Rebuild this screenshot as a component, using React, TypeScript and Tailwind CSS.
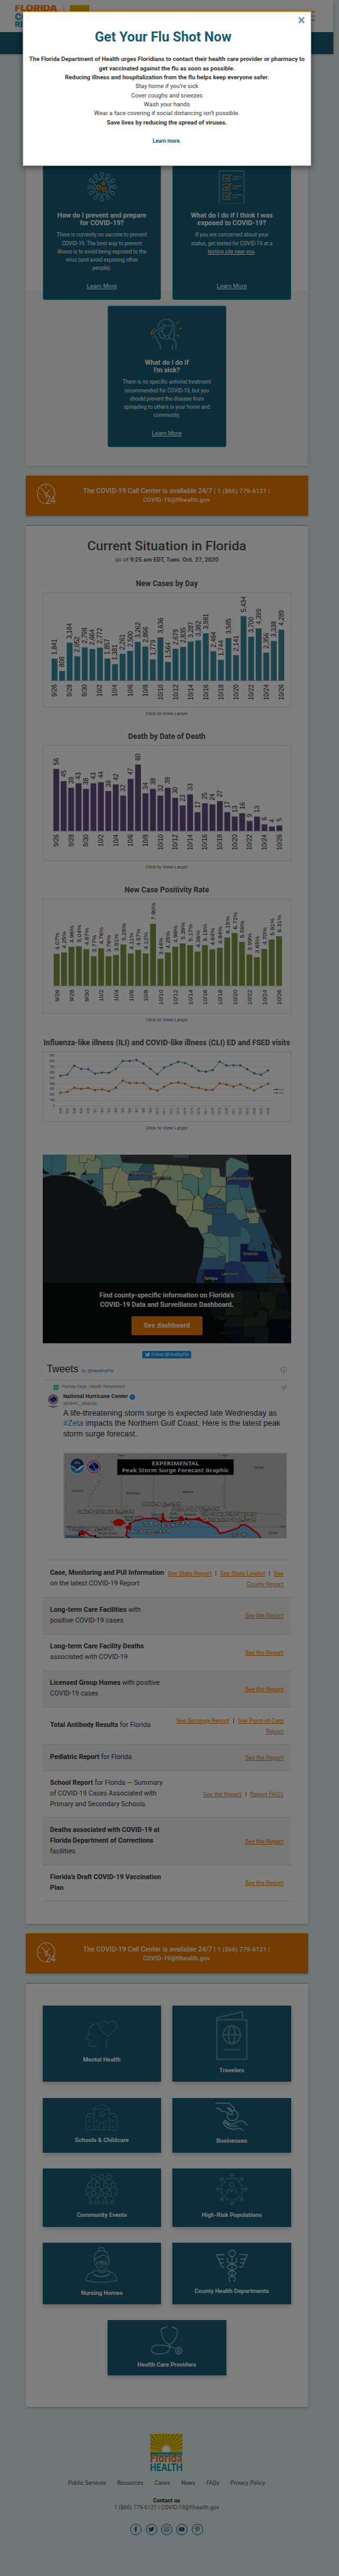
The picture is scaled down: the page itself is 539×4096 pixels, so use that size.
import React from 'react';
import { FaFacebookF, FaTwitter, FaInstagram, FaYoutube, FaPinterestP } from 'react-icons/fa';
import { BsPatchCheckFill } from 'react-icons/bs';

const FAINT = '#588a9e';
const BRIGHT = '#82adba';

/* ---------- logos ---------- */

function HealthLogo({ w, h }: { w: number; h: number }) {
  const rays = Array.from({ length: 15 }, (_, i) => (Math.PI * (i + 0.5)) / 15);
  return (
    <svg width={w} height={h} viewBox="0 0 85 98" preserveAspectRatio="none" className="block overflow-hidden">
      <rect width="85" height="50" fill="#eacb0a" />
      {rays.map((a, i) => (
        <path
          key={i}
          d={`M42 41L${42 + 90 * Math.cos(a - 0.04)} ${41 - 90 * Math.sin(a - 0.04)}L${42 + 90 * Math.cos(a + 0.04)} ${41 - 90 * Math.sin(a + 0.04)}Z`}
          fill="#b89a14"
        />
      ))}
      <circle cx="42.5" cy="42" r="14" fill="#e2cc50" />
      <circle cx="42.5" cy="42" r="10.5" fill="#fff" />
      <rect y="49" width="85" height="49" fill="#e0eeee" />
      <rect y="49" width="85" height="4" fill="#12a0ac" />
      <rect y="53" width="85" height="7" fill="#6cbcc2" />
      <text x="-1" y="75" textLength="86" lengthAdjust="spacingAndGlyphs" fontFamily="Lato, Roboto, sans-serif" fontWeight="900" fontSize="31" fill="#d8700a">Florida</text>
      <text x="-1" y="97.5" textLength="87" lengthAdjust="spacingAndGlyphs" fontFamily="Lato, Roboto, sans-serif" fontWeight="900" fontSize="28" fill="#009296">HEALTH</text>
    </svg>
  );
}

function SiteLogo() {
  return (
    <svg width="200" height="62" viewBox="0 0 200 62" className="block">
      <g fontFamily="Inter, sans-serif" fontWeight="900">
        <text x="-1" y="17" fontSize="23.5" textLength="114" lengthAdjust="spacingAndGlyphs" fill="#f58220">FLORIDA</text>
        <text x="-1" y="39.5" fontSize="23.5" textLength="114" lengthAdjust="spacingAndGlyphs" fill="#31a9c4">COVID-19</text>
        <text x="-1" y="58.5" fontSize="19" textLength="114" lengthAdjust="spacingAndGlyphs" fill="#31a9c4">RESPONSE</text>
      </g>
      <line x1="129.5" y1="0" x2="129.5" y2="60" stroke="#aaa" />
    </svg>
  );
}

/* ---------- icons of the question cards ---------- */

function VirusIcon() {
  const c = 38.5;
  const at = (a: number, r: number, o: number) =>
    `${(c + r * Math.sin(a) + o * Math.cos(a)).toFixed(2)} ${(c - r * Math.cos(a) + o * Math.sin(a)).toFixed(2)}`;
  let d = '';
  for (let i = 0; i < 12; i++) {
    const a = (i * Math.PI) / 6;
    const b = ((i + 1) * Math.PI) / 6;
    const m = (a + b) / 2;
    d += `${i === 0 ? 'M' : 'L'}${at(a, 29.5, -2)}A4.4 4.4 0 1 1 ${at(a, 29.5, 2)}L${at(a, 22.5, 2.2)}Q${at(m, 15, 0)} ${at(b, 22.5, -2.2)}`;
  }
  return (
    <svg width="77" height="77" viewBox="0 0 77 77" fill="none" strokeWidth="2.6" strokeLinejoin="round">
      <path d={d + 'Z'} stroke="#58a0b4" />
      <g stroke="#f07d00" strokeWidth="3">
        <circle cx="42" cy="29.5" r="3.4" />
        <circle cx="29.5" cy="40" r="4.8" />
        <circle cx="44.5" cy="45" r="4.8" />
      </g>
    </svg>
  );
}

function ChecklistIcon() {
  return (
    <svg width="68" height="90" viewBox="0 0 68 90" fill="none" stroke="#58a0b4" strokeWidth="2.4" strokeLinecap="round" strokeLinejoin="round">
      <rect x="1.2" y="1.2" width="65.6" height="87.6" rx="1" />
      {[0, 24, 48].map((y) => (
        <g key={y}>
          <path d={`M26 ${12 + y}H11V${28.5 + y}H28.5V${21 + y}M37 ${17.3 + y}H60M37 ${23.7 + y}H51`} />
          <path d={`M16.5 ${19 + y}L21.5 ${24 + y}L32.5 ${10.5 + y}`} stroke="#f07d00" strokeWidth="3" />
        </g>
      ))}
    </svg>
  );
}

function SickIcon() {
  return (
    <svg width="83" height="83" viewBox="699 478 144 162" preserveAspectRatio="none" fill="none" stroke="#58a0b4" strokeWidth="5" strokeLinecap="round" strokeLinejoin="round">
      <path d="M733 524V518A36 36 0 0 1 806 516V582M753 503Q766 518 804 510M753 503L762 512L712 548Q710 552 714 559L744 620V636M766 519L734 551L746 578Q756 582 762 576V566M751 538Q752 560 767 566Q796 566 795 518M783 566V578Q773 588 762 578M783 578L806 587Q815 594 814 606V636M798 614V636" />
      <path d="M827 491L819 501M832 529H840M819 559L827 568M716 529Q698 541 703 561M709 573L710 574" stroke="#f07d00" strokeWidth="5.5" />
    </svg>
  );
}

function ClockIcon() {
  return (
    <svg width="50" height="55" viewBox="0 0 50 55" fill="none" stroke="#fff" strokeWidth="1.8" strokeLinecap="round">
      <path d="M47 31A23.3 26 0 1 0 19.5 53" />
      <circle cx="24" cy="27.5" r="3.3" />
      <path d="M22 25L11 12.500M26.500 25L33 17M24 6V9.500M6 27.500H9" />
      <path d="M24 38Q24 32.500 29 32.500Q34 32.500 34 37Q34 40 24 52.500H34.500M45 53V33L36 47.500H49" strokeWidth="2.2" />
    </svg>
  );
}

/* ---------- icons of the audience tiles ---------- */

type TileIcon = { box: string; h: number; color: string; sw: number; body: React.ReactNode };

const person = (x: number, y: number) => <ellipse key={`${x}-${y}`} cx={x} cy={y} rx="18.500" ry="18" />;

const icons: Record<string, TileIcon> = {
  mental: {
    box: '23 111 255 226', h: 77, color: FAINT, sw: 6,
    body: (
      <path d="M116 132Q52 140 52 188Q56 214 46 224L27 243Q25 249 33 252Q44 251 49 260L54 274H72M54 274V288Q48 296 50 304Q54 314 68 313L98 309Q106 308 107 332M202 250Q178 286 190 332M161 117Q184 113 202 134Q218 112 244 115Q272 122 274 152Q272 166 264 174L202 234L138 176Q122 148 144 125M157 141Q148 156 162 165" />
    ),
  },
  travelers: {
    box: '1059 30 253 386', h: 132, color: FAINT, sw: 12,
    body: (
      <>
        <rect x="1067" y="101" width="238" height="307" rx="4" />
        <path d="M1066 100V92Q1066 86 1076 84L1262 40Q1272 38 1272 48V86M1126 333H1247M1118 217H1254" strokeLinecap="butt" />
        <circle cx="1186" cy="218" r="68" />
        <ellipse cx="1186" cy="218" rx="25" ry="68" />
      </>
    ),
  },
  schools: {
    box: '23 748 254 208', h: 71, color: FAINT, sw: 5,
    body: (
      <>
        <path d="M27 952V848L42 824H86M215 824H258L273 848V952H27M27 848H60M240 848H273M89 952V792M212 952V792M133 952V896H167V952M82 792L138 756Q150 748 162 756L218 792Z" />
        <path d="M51 872V886H67M51 915V929H67M107 876V886H116M107 919V929H116M183 876V886H193M183 919V929H193M235 872V886H250M235 915V929H250M152 824V831H146" />
        <circle cx="152" cy="830" r="20" />
      </>
    ),
  },
  businesses: {
    box: '1058 738 254 224', h: 76, color: '#8ebac8', sw: 8,
    body: (
      <>
        <path d="M1060 744H1166L1204 782L1209 802M1060 784H1082L1108 808Q1140 808 1162 826L1184 834Q1196 832 1190 820L1180 804Q1164 800 1152 780L1168 784Q1182 790 1184 806M1152 830Q1148 852 1160 868Q1184 892 1216 874Q1248 846 1228 816Q1210 796 1184 806" />
        <path d="M1306 916Q1282 880 1252 882L1224 892Q1196 914 1168 906L1144 884Q1132 872 1126 882Q1136 900 1162 912M1116 892Q1112 904 1146 930Q1176 950 1206 948Q1254 930 1274 958M1118 894Q1150 902 1168 922Q1196 932 1228 920" />
      </>
    ),
  },
  community: {
    box: '23 1291 254 240', h: 82, color: FAINT, sw: 7,
    body: (
      <>
        {[88, 150, 212].map((x) => person(x, 1311))}
        {[57, 119, 181, 243].map((x) => person(x, 1376))}
        {[88, 150, 212].map((x) => person(x, 1440))}
        <path d="M57 1354Q58 1338 76 1338M100 1338Q119 1338 119 1354Q119 1338 138 1338M162 1338Q181 1338 181 1354Q181 1338 200 1338M224 1338Q242 1338 243 1354M27 1461V1420Q28 1403 44 1402M44 1461V1432M70 1402Q88 1402 88 1420Q88 1402 106 1402M132 1402Q150 1402 150 1420Q150 1402 168 1402M194 1402Q212 1402 212 1420Q212 1402 230 1402M256 1402Q272 1403 274 1420V1461M256 1461V1432M57 1526V1480Q58 1466 76 1466M74 1526V1496M102 1526V1496M119 1526V1480Q119 1466 104 1466M119 1480Q119 1466 136 1466M136 1526V1496M164 1526V1496M181 1526V1480Q181 1466 166 1466M181 1480Q181 1466 198 1466M198 1526V1496M226 1526V1496M243 1526V1480Q242 1466 226 1466" />
      </>
    ),
  },
  highrisk: {
    box: '1057 1285 255 248', h: 86, color: FAINT, sw: 7,
    body: (
      <>
        <path d="M1185 1338V1290M1168 1307L1185 1290L1202 1307M1185 1480V1528M1168 1511L1185 1528L1202 1511M1112 1409H1062M1078 1392L1062 1409L1078 1426M1256 1409H1307M1292 1392L1307 1409L1292 1426M1134 1360L1097 1325M1121 1325H1097V1350M1236 1360L1272 1325M1248 1325H1272V1350M1134 1458L1097 1494M1121 1494H1097V1468M1236 1458L1272 1494M1248 1494H1272V1468" />
        <path d="M1138 1338Q1156 1326 1176 1325M1204 1326L1238 1340M1256 1366Q1268 1380 1270 1406M1270 1428L1258 1454M1236 1482Q1222 1490 1204 1493M1166 1493Q1150 1490 1138 1482M1114 1454Q1102 1440 1099 1410M1100 1390Q1106 1376 1114 1366" />
        <ellipse cx="1185" cy="1377" rx="18" ry="20" />
        <path d="M1148 1445V1428Q1150 1410 1168 1412L1185 1428L1202 1412Q1220 1410 1222 1428V1445" />
      </>
    ),
  },
  nursing: {
    box: '396 348 148 135', h: 96, color: BRIGHT, sw: 3,
    body: (
      <>
        <path d="M398 472Q400 452 420 444L443 435Q470 450 497 435L524 446Q540 454 542 472Q470 488 398 472ZM430 442L434 450Q470 466 506 450L510 442M434 450l4 4l6-2l6 6l6-2l6 4l8-2l8 2l6-4l6 2l6-6l6 2l4-4" />
        <path d="M437 398V385Q440 362 470 361Q502 362 503 388V398M454 361Q458 350 471 350Q484 350 486 361M438 398Q442 386 478 378Q500 380 504 398M438 398Q434 404 438 412L446 418Q454 436 470 437Q488 436 496 416L504 410Q508 402 503 396M446 404L470 402L494 404M446 404Q450 414 460 412Q466 410 467 404M474 404Q476 412 486 412Q492 412 494 404M470 402V412Q470 416 476 415M462 422Q470 424 478 422" />
      </>
    ),
  },
  county: {
    box: '997 356 149 119', h: 85.5, color: '#8ebac8', sw: 4,
    body: (
      <>
        <ellipse cx="1073" cy="370" rx="15" ry="12" />
        <path d="M1073 382V458M1036 375H1000L1026 420H1036M1008 391H1030M1016 405H1032M1108 374H1144L1120 420H1108M1138 391H1114M1130 405H1112" />
        <path d="M1055 389Q1044 396 1056 403L1090 415Q1102 420 1090 427L1064 436Q1046 444 1064 450L1084 458Q1094 466 1082 473M1090 389Q1102 396 1090 403L1056 415Q1044 420 1056 427L1082 436Q1100 444 1082 450L1064 458Q1052 466 1064 473" />
      </>
    ),
  },
  providers: {
    box: '698 639 148 107', h: 77, color: BRIGHT, sw: 4,
    body: (
      <>
        <path d="M773 642L750 649Q744 651 745 656Q750 690 771 703Q783 712 795 703Q818 690 821 656Q821 651 815 649L793 642M783 708Q788 726 776 735Q762 745 726 743Q698 740 700 726Q704 712 730 710Q770 710 808 722" />
        <ellipse cx="827" cy="731" rx="15" ry="12" strokeWidth="5" />
        <ellipse cx="827" cy="731" rx="6" ry="4.500" />
      </>
    ),
  },
};

function Tile({ icon, label, pt, className }: { icon: string; label: string; pt: string; className: string }) {
  const ic = icons[icon];
  return (
    <div className={`flex w-[315px] flex-col items-center bg-[#165c74] shadow-[0_5px_12px_rgba(0,0,0,0.22)] ${pt} ${className}`}>
      <svg width="85" height={ic.h} viewBox={ic.box} preserveAspectRatio="none" className="shrink-0 overflow-visible" fill="none" stroke={ic.color} strokeWidth={ic.sw} strokeLinecap="round" strokeLinejoin="round">
        {ic.body}
      </svg>
      <div className="mt-[14px] text-[15.900px] leading-[22px] font-bold text-white">{label}</div>
    </div>
  );
}

/* ---------- blocks ---------- */

function Card({ icon, title, children }: { icon: React.ReactNode; title: React.ReactNode; children: React.ReactNode }) {
  return (
    <div className="flex h-[375px] w-[315px] flex-col items-center rounded-[5px] border border-[#3a9cb6] bg-[#165c74] text-center text-white">
      <div className="flex h-[139.500px] items-center pt-[8px]">{icon}</div>
      <h3 className="text-[18px] leading-[21px] font-bold">{title}</h3>
      <p className="mt-[9px] text-[13.850px] leading-[22px] whitespace-nowrap">{children}</p>
      <a className="mt-auto mb-[23px] text-[15.800px] leading-[24px] underline">Learn More</a>
    </div>
  );
}

function CallCenter({ className }: { className: string }) {
  return (
    <section className={`flex h-[107px] w-[750px] rounded-[3px] border-t-2 border-[#ff8c00] bg-[#e67600] pt-[21px] pl-[30px] shadow-[0_3px_6px_rgba(0,0,0,0.2)] ${className}`}>
      <ClockIcon />
      <div className="ml-[31px] w-[580px] pt-[8px] text-center text-[18px] leading-[24px] text-white">
        <span className="font-medium">The COVID-19 Call Center is available 24/7 | </span>
        <span className="text-[16px] font-medium tracking-[0.44px]">
          1 (866) 779-6121 |<br />COVID-19@flhealth.gov
        </span>
      </div>
    </section>
  );
}

const days = ['9/26', '9/27', '9/28', '9/29', '9/30', ...Array.from({ length: 26 }, (_, i) => `10/${i + 1}`)];

type BarProps = {
  values: number[]; fmt: (v: number) => string; color: string;
  x0: number; pitch: number; base: number; unit: number; dateGap: number; size: number;
};

function BarChart({ values, fmt, color, x0, pitch, base, unit, dateGap, size }: BarProps) {
  return (
    <svg width="660" height="306" viewBox="0 0 660 306" className="block border border-[#dadada]" fontFamily="Liberation Sans, Arial, sans-serif" fontSize={size} fill="#222">
      <line x1={x0 - pitch / 2} x2={x0 + pitch * 30.500} y1={base + 0.8} y2={base + 0.8} stroke="#d0d0d0" strokeWidth="1.6" />
      {values.map((v, i) => {
        const x = x0 + i * pitch;
        return (
          <g key={i}>
            <rect x={x - 7.8} width="15.600" y={base - v * unit} height={v * unit} fill={color} />
            <text transform={`translate(${x + 6} ${base - v * unit - 10.500}) rotate(-90)`}>{fmt(v)}</text>
            {i % 2 === 0 && (
              <>
                <line x1={x - pitch / 2} x2={x - pitch / 2} y1={base} y2={base + 5.500} stroke="#c8c8c8" />
                <text transform={`translate(${x + 6} ${base + dateGap}) rotate(-90)`} textAnchor="end">{days[i]}</text>
              </>
            )}
          </g>
        );
      })}
    </svg>
  );
}

const cases = [1841, 808, 3184, 2052, 2798, 2664, 2772, 1857, 1381, 2261, 2500, 3262, 2866, 1779, 3636, 1564, 2679, 2835, 3287, 3382, 3981, 2464, 1744, 3585, 2141, 5434, 3700, 4399, 2356, 3338, 4289];
const deaths = [56, 45, 39, 43, 38, 43, 44, 36, 42, 32, 47, 60, 34, 38, 32, 39, 30, 23, 33, 17, 25, 24, 27, 17, 13, 16, 9, 13, 6, 4, 5];
const rates = [4.07, 4.25, 4.96, 5.04, 4.67, 3.77, 4.76, 3.76, 3.91, 5.26, 4.11, 4.57, 4.12, 7.9, 3.44, 4.25, 4.98, 5.39, 5.17, 4.36, 5.19, 4.64, 4.84, 6.15, 6.72, 5.59, 3.99, 3.65, 4.7, 5.91, 6.31];
const cli = [540, 560, 720, 663, 660, 578, 597, 593, 663, 805, 805, 822, 758, 663, 567, 687, 740, 790, 768, 715, 630, 613, 643, 792, 725, 728, 726, 655, 583, 557, 636];
const ili = [238, 252, 325, 307, 323, 283, 296, 264, 328, 453, 412, 410, 412, 308, 272, 345, 405, 420, 400, 335, 323, 288, 287, 405, 383, 347, 388, 326, 277, 343, 400];

function LineChart() {
  const X = (i: number) => 41.7 + i * 18.720;
  const Y = (v: number) => 145.500 - v * 0.1511;
  const series: [number[], string][] = [[cli, '#34788c'], [ili, '#c86a10']];
  return (
    <svg width="660" height="186" viewBox="0 0 660 186" className="block border border-[#dadada]" fontFamily="Open Sans, sans-serif" fontSize="7.600" fill="#222">
      {Array.from({ length: 10 }, (_, i) => (
        <g key={i}>
          <line x1="31.500" x2="613" y1={Y(i * 100)} y2={Y(i * 100)} stroke="#dadada" />
          <text x="25.500" y={Y(i * 100) + 2.7} textAnchor="end">{i * 100}</text>
        </g>
      ))}
      {days.map((d, i) => (
        <g key={d}>
          <line x1={X(i) - 9.360} x2={X(i) - 9.360} y1="145.500" y2="148" stroke="#c8c8c8" />
          <text transform={`translate(${X(i) + 2.8} 150.500) rotate(-90)`} textAnchor="end">{d}</text>
        </g>
      ))}
      {series.map(([vals, color]) => (
        <g key={color} stroke={color} fill={color}>
          <polyline fill="none" strokeWidth="1.600" points={vals.map((v, i) => `${X(i)},${Y(v)}`).join(' ')} />
          {vals.map((v, i) => <circle key={i} cx={X(i)} cy={Y(v)} r="2.600" />)}
        </g>
      ))}
      <g strokeWidth="1.500">
        <path d="M617.500 101H635" stroke="#34788c" /><circle cx="626" cy="101" r="2.200" fill="#34788c" />
        <path d="M617.500 110.500H635" stroke="#c86a10" /><circle cx="626" cy="110.500" r="2.200" fill="#c86a10" />
      </g>
      <text x="636.500" y="103.600" fontSize="7.200">CLI</text>
      <text x="636.500" y="113.100" fontSize="7.200">ILI</text>
    </svg>
  );
}

/* county fills, drawn on a 1568 x 1545 grid */
const T = '#579fae', G = '#b0cda2', C = '#cacf9f', S = '#7cb6ac', B = '#427aa0', N = '#345294', D = '#16286e';
const counties: [string, string][] = [
  ['#3a3d3c', '486,24 1285,24 1275,90 1225,62 1185,46 1156,80 1155,203 1120,200 1112,132 502,88'],
  [T, '0,24 54,24 56,187 0,208'], [T, '54,24 148,24 147,190 56,187'],
  [G, '148,24 230,24 230,87 268,88 258,110 272,155 245,180 241,226 190,200 147,190'],
  [C, '230,24 332,24 328,72 302,72 298,58 282,58 280,87 230,87'],
  [G, '282,58 298,58 302,72 328,72 334,45 358,45 358,60 370,60 370,132 358,135 358,175 272,178 275,155 258,115 270,88 280,87'],
  [S, '332,24 486,24 502,88 485,122 432,122 432,133 370,132 370,60 358,60 358,45 334,45'],
  [T, '241,185 358,176 358,135 380,134 380,350 320,290 241,226'],
  [C, '380,134 432,133 432,122 475,122 480,138 460,180 440,258 380,258'],
  [C, '485,122 498,122 498,150 520,155 522,170 545,180 538,215 545,270 575,318 468,321 440,312 442,258 460,180'],
  [C, '380,258 440,258 438,300 465,325 460,400 425,432 400,430 400,395 380,350'],
  [C, '468,321 580,318 622,340 622,355 540,385 480,420 440,438 425,430 460,400 465,360'],
  [S, '502,88 632,96 610,135 610,155 545,180 522,170 520,155 498,150 498,122 485,122'],
  [B, '632,96 700,100 705,148 690,155 686,232 645,234 640,222 538,222 545,195 610,155 615,130'],
  [G, '535,228 640,224 645,234 684,234 684,290 655,290 620,300 600,330 575,318 545,275'],
  [C, '700,100 792,105 790,135 765,160 755,200 730,225 705,290 684,290 690,155 705,148'],
  [G, '792,105 870,112 890,180 878,235 830,235 825,222 765,222 755,200 765,160 790,135'],
  [C, '872,112 1003,124 998,160 1016,190 1005,215 985,213 930,180 890,180'],
  [G, '740,225 825,222 830,235 850,238 852,380 858,400 850,435 810,420 800,385 780,350 705,292'],
  [G, '850,238 878,238 880,290 925,310 955,360 950,384 852,384'],
  [S, '890,185 930,178 982,215 980,355 955,360 925,305 880,290 878,235'],
  [S, '1003,124 1060,128 1060,280 1035,330 1015,382 985,350 982,215 1005,215 1016,190 998,160'],
  [G, '1060,128 1112,132 1120,200 1155,203 1155,278 1060,276'],
  [S, '1155,203 1156,80 1185,46 1225,62 1275,90 1298,95 1298,150 1245,130 1210,165 1185,200'],
  [N, '1185,200 1210,165 1245,130 1290,150 1308,240 1298,290 1240,282 1235,263 1157,262 1157,235'],
  [T, '1157,262 1240,265 1240,310 1258,380 1205,382 1157,412'],
  [T, '1240,282 1298,290 1308,240 1330,360 1345,440 1318,450 1277,450 1262,380 1240,310'],
  [C, '1060,278 1132,280 1100,335 1075,350 1040,340 1036,320'],
  [G, '1132,280 1155,280 1155,412 1120,380 1075,350 1105,335'],
  [B, '1015,382 1040,345 1060,348 1120,375 1155,410 1152,505 1130,520 1115,500 1040,498 1015,480'],
  [C, '855,385 950,385 942,450 945,468 915,545 900,550 880,515 842,488 840,440 850,430'],
  [C, '950,385 970,350 985,350 1013,385 1013,470 985,465 945,465'],
  [G, '945,468 985,465 1015,480 1040,498 1070,500 1070,588 1042,590 1042,645 998,658 978,605 925,600 900,555 915,545'],
  [B, '1070,500 1115,500 1130,520 1155,498 1205,488 1228,515 1228,535 1248,548 1250,590 1245,672 1090,672 1065,648 1042,645 1042,590 1070,588'],
  [S, '1157,412 1205,382 1262,380 1277,450 1290,530 1248,548 1228,535 1205,488 1157,498'],
  [G, '1277,455 1318,450 1345,440 1372,520 1362,522 1362,573 1300,573 1300,530 1290,530'],
  [B, '1248,548 1300,535 1300,573 1362,573 1362,522 1375,520 1450,740 1400,735 1380,720 1350,730 1315,710 1315,675 1290,620 1250,590'],
  [S, '998,658 1060,645 1090,672 1125,730 1100,772 1070,765 1015,765 1018,700'],
  [S, '1090,672 1176,674 1176,885 1152,888 1152,820 1115,800 1100,772 1125,730'],
  [S, '1015,765 1068,765 1100,772 1115,800 1152,825 1152,832 1105,832 1105,848 1010,848'],
  [T, '1176,674 1245,672 1250,590 1290,620 1315,675 1310,712 1300,735 1247,735 1247,878 1176,878'],
  [B, '1010,848 1105,848 1105,832 1152,832 1152,937 985,937 1000,900'],
  [D, '1247,735 1300,735 1292,780 1320,790 1410,795 1427,878 1247,878'],
  [B, '1300,735 1315,710 1350,730 1380,720 1410,792 1320,790 1292,780'],
  [B, '1400,732 1438,735 1450,790 1475,890 1522,1050 1427,1050 1428,878 1410,795'],
  [B, '1450,765 1490,790 1508,840 1490,870 1490,930 1470,890 1465,830'],
  [N, '1152,890 1176,878 1200,872 1247,878 1275,910 1290,960 1325,1010 1365,1108 1152,1108 1142,910'],
  [B, '1247,878 1427,878 1427,1108 1365,1108 1325,1010 1290,960 1275,910'],
  [D, '1015,937 1152,937 1152,1108 1040,1108 1075,1030 1040,1015 1015,980'],
  [N, '985,937 1015,937 1015,1070 1000,1095 968,1035'],
  [B, '1040,1108 1152,1108 1152,1310 1090,1340 1040,1230 1010,1140'],
  [C, '1152,1110 1267,1110 1267,1210 1152,1210'], [C, '1152,1213 1267,1213 1267,1310 1152,1310'],
  [S, '1267,1112 1365,1112 1350,1160 1400,1220 1425,1260 1360,1255 1360,1283 1336,1283 1336,1312 1267,1312'],
  [C, '1365,1112 1450,1114 1450,1138 1472,1138 1472,1290 1425,1338 1425,1270 1365,1190'],
  [S, '1427,1052 1522,1052 1552,1138 1450,1138 1450,1108 1427,1108'],
  [T, '1472,1138 1552,1138 1568,1180 1568,1255 1472,1255'], [S, '1472,1258 1568,1258 1568,1336 1425,1336'],
  [S, '1105,1313 1267,1313 1267,1398 1130,1398'], [C, '1267,1313 1336,1312 1360,1283 1360,1255 1425,1270 1410,1398 1267,1398'],
  [N, '1130,1398 1267,1398 1267,1480 1235,1524 1150,1480'], [S, '1267,1398 1425,1398 1425,1524 1336,1524 1336,1480 1267,1480'],
  [N, '1205,1524 1267,1480 1336,1480 1336,1524'], [D, '1425,1338 1568,1338 1568,1524 1425,1524'],
];

function CountyMap() {
  const cities: [string, number, number, number, string][] = [
    ['Valdosta', 345, 17, 42, '#a8a8a8'], ['Tallahassee', 235, 62, 66, '#d0d0d0'], ['Jacksonville', 489, 74, 71, '#d0d0d0'],
    ['Gainesville', 433, 150, 53, '#b4b4b4'], ['Palm Coast', 539, 162, 54, '#909090'], ['Orlando', 532, 274.500, 40, '#c0c0c0'],
    ['Lakeland', 474, 329, 43, '#b8b8b8'], ['Tampa', 427.500, 340, 37, '#d0d0d0'], ['Palm Bay', 598, 334, 45, '#a8a8a8'],
    ['Cape Coral', 468, 484, 53, '#b0b0b0'], ['Port S', 632, 407, 28, '#b0b0b0'], ['Lucie', 637, 420, 23, '#b0b0b0'], ['W', 650, 469, 10, '#b0b0b0'],
  ];
  return (
    <svg width="660" height="500" viewBox="0 8 660 500" className="block">
      <rect y="8" width="660" height="500" fill="#1f2125" />
      <g transform="scale(0.42092 0.33333)" stroke="#5c6462" strokeWidth="2.400" strokeLinejoin="round">
        {counties.map(([fill, pts]) => <polygon key={pts} points={pts} fill={fill} />)}
        <path d="M0 205L60 188L130 188L200 205L300 270L380 350M378 370L375 395L388 432L420 432M440 440L460 460L520 425L570 385" fill="none" stroke="#555c60" strokeWidth="4" />
        <path d="M1283 24L1290 100L1298 100L1318 310L1345 440L1420 640L1505 800L1480 900L1568 1180M1435 735L1470 860L1500 960" fill="none" stroke="#555c60" strokeWidth="4" />
        <path d="M105 178L125 170L150 165L165 155L175 168L200 163L212 190L180 182L150 188L125 184ZM0 120L10 150L45 172L20 182L0 170ZM272 225L300 232L310 218L318 240L340 232L312 252L300 270L330 285L350 300L378 315L345 310L310 285L290 250ZM485 405L505 390L500 412L530 400L480 425ZM1438 735L1470 830L1462 880L1490 920L1480 940L1445 800ZM1000 985L1040 1000L1075 1030L1060 1085L1030 1110L1010 1170L998 1130L1040 1060L1010 1015ZM1110 1330L1135 1350L1170 1315L1140 1380L1150 1430L1190 1510L1140 1500L1110 1440L1125 1400ZM500 60L550 60L520 75Z" fill="#1f2125" stroke="none" />
      </g>
      <g fontFamily="Noto Sans, sans-serif" fontWeight="600" fontSize="11.500" stroke="#2a2c30" strokeWidth="2" paintOrder="stroke">
        {cities.map(([name, x, y, len, fill]) => (
          <text key={name} x={x} y={y} textLength={len} lengthAdjust="spacingAndGlyphs" fill={fill}>{name}</text>
        ))}
        <text x="282" y="75.500" textLength="60" lengthAdjust="spacingAndGlyphs" fill="#6c746e" stroke="#3c4240" strokeWidth="1">FLORIDA</text>
      </g>
    </svg>
  );
}

function NwsBadge({ cx, cy, r }: { cx: number; cy: number; r: number }) {
  return (
    <g transform={`translate(${cx} ${cy}) scale(${r / 21})`}>
      <circle r="21" fill="#eee" />
      <circle r="17" fill="none" stroke="#d02030" strokeWidth="5" strokeDasharray="3 1.800" />
      <circle r="13.500" fill="#3aa0dc" />
      <path d="M-13 1Q-9-5-6-3Q-5-10 1-9Q6-11 9-5Q13-5 13 1Q13 6 5 5L3 11L-3 9L-6 5Q-12 6-13 1Z" fill="#0a0a90" />
      <path d="M-5-9L1 0L0 2L6 10" fill="none" stroke="#fff" strokeWidth="1.500" />
    </g>
  );
}

function SurgeMap() {
  const big: [string, number, number, number, number][] = [
    ['Mobile Bay...3-5 ft', 217, 151, 101, 11], ['Pensacola Bay...2-4 ft', 297, 164, 123, 11], ['Lake Pontchartrain...2-4 ft', 47, 171.500, 147, 11],
    ['Choctawhatchee Bay and', 374, 178, 146, 11], ['Saint Andrew Bay...1-3 ft', 378, 192, 139, 11], ['Vermilion Bay...1-3 ft', 20, 216, 117, 11],
    ['Lake Borgne...4-6 ft', 179, 223.500, 111, 11], ['5-8 ft', 221, 203, 37, 12.500], ['3-5 ft', 267, 207, 37, 12.500], ['2-4 ft', 306, 201, 38, 12.500], ['1-3 ft', 455, 232, 38, 12.500],
  ];
  const small: [string, number, number, number, number][] = [
    ['Dauphin', 241, 177, 34, 9], ['Island', 242, 186.500, 24, 9], ['AL/FL', 290, 176, 22, 9], ['Border', 289, 185.500, 27, 9], ['Navarre', 328, 178, 32, 9],
    ['Mouth of the', 168, 183.500, 52, 9], ['Pearl River', 172, 193, 44, 9], ['Mouth of the', 99, 228, 51, 9], ['Atchafalaya River', 99, 237.500, 71, 9], ['Intracoastal', 14, 236, 49, 9],
    ['Louisiana', 29, 114, 31, 7.500], ['Mississippi', 174, 121, 37, 7.500], ['Alabama', 324, 118, 28, 7.500], ['Georgia', 514, 51.500, 25, 7.500], ['Florida', 553, 226, 23, 7.500],
    ['90°W', 154, 21, 15, 6.500], ['85°W', 429, 21, 15, 6.500], ['30°N', 582.500, 209, 13, 6.500], ['30°N', 15, 209, 12, 6.500],
  ];
  return (
    <svg width="594" height="228" viewBox="7.600 10.500 594.400 228" className="block">
      <rect x="8" y="11" width="594" height="240" rx="3" fill="#fff" stroke="#8f8f8f" />
      <rect x="10.800" y="13.800" width="588.500" height="240" fill="#bcbcbc" stroke="#8a8a8a" />
      <g transform="scale(0.38903 0.33333)" fill="none" stroke="#6a6a6a" strokeWidth="2">
        <path d="M440 735L446 690L470 640L490 610L520 580L600 558L640 560L700 585L760 580L860 560L950 562L1066 636L1086 678L1130 668L1214 630L1240 605L1270 610L1350 680L1372 735ZM28 684L110 680L135 700L190 690L235 700L265 735H28Z" fill="#6cacd4" stroke="none" />
        <path d="M416 42V620M1122 42V460M28 622H1540M185 457H455L445 520M755 457H1122L1135 500L1515 524L1525 560H1540M657 42L632 310L640 560M1080 42L1090 100M1122 210L1135 245L1118 265L1105 320L1115 370L1106 420L1122 457M248 42L265 70L245 80L268 110L258 140L275 170L262 200L290 232L270 250L268 275L250 260L262 290L235 300L240 325L212 335L225 355L195 365L210 385L183 410L200 440L185 457" />
        <path d="M134 42V52M275 42V52M557 42V52M699 42V52M840 42V52M981 42V52M1264 42V52M1405 42V52M28 125H38M28 291H38M28 457H38M1540 126H1530M1540 291H1530M1540 457H1530" strokeWidth="3" />
        <path d="M334 580L350 566L358 580L345 594Z" fill="#6cacd4" stroke="none" />
        <path d="M356 592L365 570L395 558L430 570L435 588L452 592L430 600L410 616L370 610ZM440 620L485 595L480 640L455 655ZM698 500L712 560L730 575L690 585L685 560ZM120 660L150 650L178 662L160 690L125 686ZM820 530L840 548L838 575L800 575ZM900 560L950 543L960 562L1000 570L1040 610L1060 625L1020 610L950 575Z" fill="#f00000" stroke="none" />
        <path d="M475 715L446 690L456 655L466 620L478 595L515 572L580 555L650 557L690 580L760 578L860 560L950 563L1020 600L1066 636L1086 674L1126 665L1214 630L1234 605L1266 606L1350 678L1372 725M128 684L172 665L200 690L236 698L262 716" stroke="#f00000" strokeWidth="11" />
        {[[128, 684], [236, 697], [473, 597], [688, 579], [762, 576], [859, 558]].map(([x, y]) => (
          <ellipse key={x} cx={x} cy={y} rx="9" ry="12" fill="#000" stroke="#fff" strokeWidth="2" />
        ))}
      </g>
      <g fontFamily="Noto Sans, sans-serif" fill="#333">
        {small.map(([t, x, y, l, s], i) => <text key={i} x={x} y={y} fontSize={s} textLength={l} lengthAdjust="spacingAndGlyphs">{t}</text>)}
      </g>
      <g fontFamily="Liberation Sans, Arial, sans-serif" fontWeight="700" fill="#f4f4f4" stroke="#333" strokeWidth="2" paintOrder="stroke">
        {big.map(([t, x, y, l, s]) => <text key={t} x={x} y={y} fontSize={s} textLength={l} lengthAdjust="spacingAndGlyphs">{t}</text>)}
      </g>
      <rect x="150.500" y="28" width="309" height="41" fill="#000" stroke="#555" />
      <g fontFamily="Noto Sans, sans-serif" fontWeight="700" fill="#e8e8e8">
        <text x="242" y="43.500" fontSize="16" textLength="126" lengthAdjust="spacingAndGlyphs">EXPERIMENTAL</text>
        <text x="163" y="63" fontSize="16" textLength="284" lengthAdjust="spacingAndGlyphs">Peak Storm Surge Forecast Graphic</text>
      </g>
      <circle cx="44" cy="47" r="20" fill="#e4e4e4" />
      <circle cx="44" cy="47" r="18" fill="#1090c8" />
      <path d="M26 44A18 18 0 0 1 62 44L46 54Z" fill="#203878" />
      <path d="M26 43Q34 44 43 56Q52 44 62 42Q56 54 44 58L38 60L42 56Q34 50 26 43Z" fill="#fff" />
      <text x="36" y="41" fontSize="7" fontWeight="700" fontFamily="Inter, sans-serif" textLength="15" lengthAdjust="spacingAndGlyphs" fill="#c8d0e0">NOAA</text>
      <NwsBadge cx={88} cy={47} r={21} />
    </svg>
  );
}

function ChartBlock({ title, className, children }: { title: string; className: string; children: React.ReactNode }) {
  return (
    <div className={`flex flex-col items-center ${className}`}>
      <h3 className="h-[34px] text-[20px] leading-[22px] font-bold whitespace-nowrap text-[#4d4d4d]">{title}</h3>
      {children}
      <div className="mt-[7px] text-[12.750px] leading-[20px] text-[#555]">Click to View Larger</div>
    </div>
  );
}

function Links({ items }: { items: string[][] }) {
  return (
    <div className="pr-[20px] text-right text-[15.650px] leading-[28.500px] whitespace-nowrap text-[#222]">
      {items.map((line, i) => (
        <div key={i}>
          {line.map((l, j) => (l === '|' ? <span key={j} className="px-[9.500px]">|</span> : <a key={j} className="text-[#e67600] underline">{l}</a>))}
        </div>
      ))}
    </div>
  );
}

const report = [['See the Report']];
const rows: { h: string; text: React.ReactNode; links: string[][] }[] = [
  { h: 'h-[99px]', text: <><b>Case, Monitoring and PUI Information</b><br />on the latest COVID-19 Report</>, links: [['See State Report', '|', 'See State Linelist', '|', 'See'], ['County Report']] },
  { h: 'h-[98px]', text: <><b>Long-term Care Facilities</b> with<br />positive COVID-19 cases</>, links: report },
  { h: 'h-[96.500px]', text: <><b>Long-term Care Facility Deaths</b><br />associated with COVID-19</>, links: report },
  { h: 'h-[97px]', text: <><b>Licensed Group Homes</b> with positive<br />COVID-19 cases</>, links: report },
  { h: 'h-[98.500px]', text: <><b>Total Antibody Results</b> for Florida</>, links: [['See Serology Report', '|', 'See Point-of-Care'], ['Report']] },
  { h: 'h-[70px]', text: <><b>Pediatric Report</b> for Florida</>, links: report },
  { h: 'h-[125px]', text: <><b>School Report</b> for Florida — Summary<br />of COVID-19 Cases Associated with<br />Primary and Secondary Schools</>, links: [['See the Report', '|', 'Report FAQ’s']] },
  { h: 'h-[125.500px]', text: <><b>Deaths associated with COVID-19 at<br />Florida Department of Corrections</b><br />facilities</>, links: report },
  { h: 'h-[96.500px]', text: <b>Florida’s Draft COVID-19 Vaccination<br />Plan</b>, links: report },
];

function Tweets() {
  return (
    <div className="h-[575px] font-['Liberation_Sans',Arial,sans-serif] text-[#292f33]">
      <div className="mx-auto mt-[20px] flex h-[20px] w-[130px] items-center justify-center gap-[4px] rounded-[3px] bg-[#1b95e0] text-[11px] text-white">
        <FaTwitter size={13} /> Follow @HealthyFla
      </div>
      <div className="flex h-[59px] items-center border-b border-[#e1e8ed] px-[11px]">
        <span className="text-[26.500px]">Tweets</span>
        <span className="mt-[11px] ml-[8px] text-[12px] text-[#697882]">by <span className="text-[#2b7bb9]">@HealthyFla</span></span>
        <svg width="17" height="17" viewBox="0 0 17 17" className="mt-[6px] ml-auto" fill="none" stroke="#8899a6" strokeWidth="1.500">
          <circle cx="8.500" cy="8.500" r="7.500" />
          <path d="M8.500 7.500V13M8.500 4.500V6" strokeWidth="2" />
        </svg>
      </div>
      <div className="flex items-center pt-[9px] pr-[10px] pl-[29px]">
        <svg width="14" height="14" viewBox="0 0 14 14" fill="none" stroke="#fff" strokeWidth="1.400">
          <rect width="14" height="14" rx="2" fill="#19cf86" stroke="none" />
          <path d="M2 6L4 4L6 6M4 4V10H7.500M12 8L10 10L8 8M10 10V4H6.500" />
        </svg>
        <span className="ml-[8px] text-[12px] text-[#697882]">Florida Dept. Health Retweeted</span>
        <FaTwitter size={17} className="ml-auto text-[#ccd6dd]" />
      </div>
      <div className="flex pl-[12px]">
        <svg width="32" height="38" viewBox="0 0 42 50" className="mt-[8px]">
          <NwsBadge cx={21} cy={20} r={19} />
          <path d="M5 44H37M14 48H28" stroke="#3a3a90" strokeWidth="2" />
        </svg>
        <div className="ml-[11px]">
          <div className="mt-[7px] flex items-center text-[13.950px] leading-[20px] font-bold">
            National Hurricane Center <BsPatchCheckFill size={15} className="ml-[4px] text-[#1b95e0]" />
          </div>
          <div className="text-[12.900px] leading-[16px] text-[#697882]">@NHC_Atlantic</div>
          <p className="mt-[4px] text-[20.900px] leading-[27px] whitespace-nowrap">
            A life-threatening storm surge is expected late Wednesday as<br />
            <span className="text-[#2b7bb9]">#Zeta</span> impacts the Northern Gulf Coast. Here is the latest peak<br />
            storm surge forecast.
          </p>
          <div className="mt-[37px]"><SurgeMap /></div>
        </div>
      </div>
    </div>
  );
}

function Modal() {
  return (
    <div className="absolute top-[30px] left-[59.500px] h-[411.500px] w-[767.500px] border border-t-[3px] border-[#999] border-t-[#ff8c00] bg-white text-center shadow-[0_5px_15px_rgba(0,0,0,0.5)]">
      <svg width="18" height="17" viewBox="0 0 18 17" className="absolute top-[14px] right-[16px]" stroke="#6f9aab" strokeWidth="4.400" strokeLinecap="butt">
        <path d="M2 1L16 16M16 1L2 16" />
      </svg>
      <h2 className="mt-[45px] pr-[20px] text-[36px] leading-[42px] font-bold text-[#165c74]">Get Your Flu Shot Now</h2>
      <div className="mt-[27px] text-[16px] leading-[24px] text-[#333]">
        <div className="font-bold whitespace-nowrap">
          The Florida Department of Health urges Floridians to contact their health care provider or pharmacy to<br />
          get vaccinated against the flu as soon as possible.<br />
          Reducing illness and hospitalization from the flu helps keep everyone safer.
        </div>
        Stay home if you’re sick<br />
        Cover coughs and sneezes<br />
        Wash your hands<br />
        Wear a face covering if social distancing isn’t possible.
        <div className="font-bold">Save lives by reducing the spread of viruses.</div>
      </div>
      <a className="mt-[26px] block text-[14px] leading-[22px] font-bold text-[#165c74]">Learn more.</a>
    </div>
  );
}

export default function App() {
  return (
    <div className="min-h-[4096px] overflow-hidden bg-[#707777]">
      <div className="relative h-[6842px] w-[901px] overflow-hidden bg-[#e0eeee] font-[Roboto,sans-serif] text-[#333] [zoom:0.5987]">
        <div className="w-[885px] shadow-[0_2px_6px_rgba(0,0,0,0.35)]">
          <header className="flex h-[85px] items-start bg-white pt-[13.500px] pl-[40px]">
            <SiteLogo />
            <div className="-ml-[54px]"><HealthLogo w={52} h={60} /></div>
            <div className="mt-[16.500px] mr-[49px] ml-auto flex w-[36px] flex-col gap-[8px]">
              <span className="h-[3px] bg-[#ff8c00]" />
              <span className="h-[3px] bg-[#ff8c00]" />
              <span className="h-[3px] bg-[#ff8c00]" />
            </div>
          </header>
          <div className="h-[59px] bg-[#165c74]" />
        </div>

        <main className="flex flex-col pl-[68px]">
          <section className="mt-[28px] flex h-[1065px] w-[750px] flex-col items-center bg-[linear-gradient(#fff_600px,#f2f2f2_600px)] pt-[249.500px] shadow-[0_2px_6px_rgba(0,0,0,0.2)]">
            <div className="flex gap-[30px]">
              <Card icon={<VirusIcon />} title={<>How do I prevent and prepare<br />for COVID-19?</>}>
                There is currently no vaccine to prevent<br />COVID-19. The best way to prevent<br />illness is to avoid being exposed to the<br />virus (and avoid exposing other<br />people).
              </Card>
              <Card icon={<ChecklistIcon />} title={<>What do I do if I think I was<br />exposed to COVID-19?</>}>
                If you are concerned about your<br />status, get tested for COVID-19 at a<br /><span className="underline">testing site near you</span>.
              </Card>
            </div>
            <div className="mt-[16px]">
              <Card icon={<SickIcon />} title={<>What do I do if<br />I'm sick?</>}>
                There is no specific antiviral treatment<br />recommended for COVID-19, but you<br />should prevent the disease from<br />spreading to others in your home and<br />community.
              </Card>
            </div>
          </section>

          <CallCenter className="mt-[25px]" />

          <section className="mt-[25px] flex h-[3716px] w-[750px] flex-col rounded-[3px] border-t-2 border-[#ff8c00] bg-white px-[45px] shadow-[0_2px_6px_rgba(0,0,0,0.2)]">
            <h2 className="mt-[33px] text-center text-[35.300px] leading-[42px] font-medium text-[#4d4d4d]">Current Situation in Florida</h2>
            <p className="mt-[5px] text-center text-[16px] leading-[24px] text-[#555]">as of <span className="text-[15.900px] font-bold">9:25 am EDT, Tues. Oct. 27, 2020</span></p>
            <ChartBlock title="New Cases by Day" className="mt-[40px]">
              <BarChart values={cases} fmt={(v) => v.toLocaleString('en-US')} color="#35879d" x0={28} pitch={20.3} base={235} unit={0.03187} dateGap={10} size={17} />
            </ChartBlock>
            <ChartBlock title="Death by Date of Death" className="mt-[39.500px]">
              <BarChart values={deaths} fmt={String} color="#5e4b7c" x0={32.500} pitch={19.970} base={228.500} unit={2.976} dateGap={9} size={17} />
            </ChartBlock>
            <ChartBlock title="New Case Positivity Rate" className="mt-[40px]">
              <BarChart values={rates} fmt={(v) => v.toFixed(2) + '%'} color="#7a9440" x0={33.600} pitch={19.910} base={232} unit={21.050} dateGap={10.500} size={16.500} />
            </ChartBlock>
            <ChartBlock title="Influenza-like illness (ILI) and COVID-like illness (CLI) ED and FSED visits" className="mt-[39.500px]">
              <LineChart />
            </ChartBlock>

            <div className="relative mt-[61px]">
              <CountyMap />
              <div className="absolute inset-x-0 bottom-0 flex h-[160px] flex-col items-center bg-[rgba(0,5,4,0.82)] pt-[20px] text-white">
                <p className="text-center text-[17.900px] leading-[26px] font-bold">Find county-specific information on Florida’s<br />COVID-19 Data and Surveillance Dashboard.</p>
                <div className="mt-[16px] flex h-[51px] w-[189px] items-center justify-center rounded-[3px] bg-[#e67600] text-[18px] font-bold tracking-[0.25px]">See dashboard</div>
              </div>
            </div>

            <Tweets />

            <div className="border-t border-[#dcdcdc]">
              {rows.map((r, i) => (
                <div key={i} className={`flex items-center justify-between border-b border-[#dcdcdc] ${r.h} ${i % 2 ? 'bg-[#f0f0f0]' : ''}`}>
                  <div className="pl-[20px] text-[17.900px] leading-[28px] whitespace-nowrap">{r.text}</div>
                  <Links items={r.links} />
                </div>
              ))}
            </div>
          </section>

          <CallCenter className="mt-[25px]" />

          <section className="mt-[25px] flex h-[1126px] w-[750px] flex-col gap-[42px] rounded-[3px] border-t-2 border-[#ff8c00] bg-white px-[45px] pt-[58px] shadow-[0_2px_6px_rgba(0,0,0,0.2)]">
            <div className="flex justify-between">
              <Tile icon="mental" label="Mental Health" pt="pt-[41px]" className="h-[203px]" />
              <Tile icon="travelers" label="Travelers" pt="pt-[14px]" className="h-[203px]" />
            </div>
            <div className="flex justify-between">
              <Tile icon="schools" label="Schools & Childcare" pt="pt-[16px]" className="h-[146px]" />
              <Tile icon="businesses" label="Businesses" pt="pt-[13px]" className="h-[146px]" />
            </div>
            <div className="flex justify-between">
              <Tile icon="community" label="Community Events" pt="pt-[15px]" className="h-[155px]" />
              <Tile icon="highrisk" label="High-Risk Populations" pt="pt-[12px]" className="h-[155px]" />
            </div>
            <div className="flex justify-between">
              <Tile icon="nursing" label="Nursing Homes" pt="pt-[12px]" className="h-[164px]" />
              <Tile icon="county" label="County Health Departments" pt="pt-[18px]" className="h-[164px]" />
            </div>
            <div className="flex justify-center">
              <Tile icon="providers" label="Health Care Providers" pt="pt-[15px]" className="h-[147px]" />
            </div>
          </section>
        </main>

        <footer className="mt-[72px] flex w-[885px] flex-col items-center text-[14px] leading-[19px] tracking-[0.4px] text-[#555]">
          <HealthLogo w={85} h={98.500} />
          <nav className="mt-[23px] flex gap-[30px] text-[#444]">
            <span>Public Services</span><span>Resources</span><span>Cases</span><span>News</span><span>FAQs</span><span>Privacy Policy</span>
          </nav>
          <div className="mt-[27px] font-bold text-[#222]">Contact us</div>
          <div>1 (866) 779-6121 | COVID-19@flhealth.gov</div>
          <div className="mt-[33px] flex gap-[10.700px] text-[#165c74]">
            {[FaFacebookF, FaTwitter, FaInstagram, FaYoutube, FaPinterestP].map((Icon, i) => (
              <span key={i} className="flex size-[30px] items-center justify-center rounded-full border-2 border-[#165c74]"><Icon size={16} /></span>
            ))}
          </div>
        </footer>

        <div className="absolute inset-0 bg-black/50" />
        <Modal />
      </div>
    </div>
  );
}
